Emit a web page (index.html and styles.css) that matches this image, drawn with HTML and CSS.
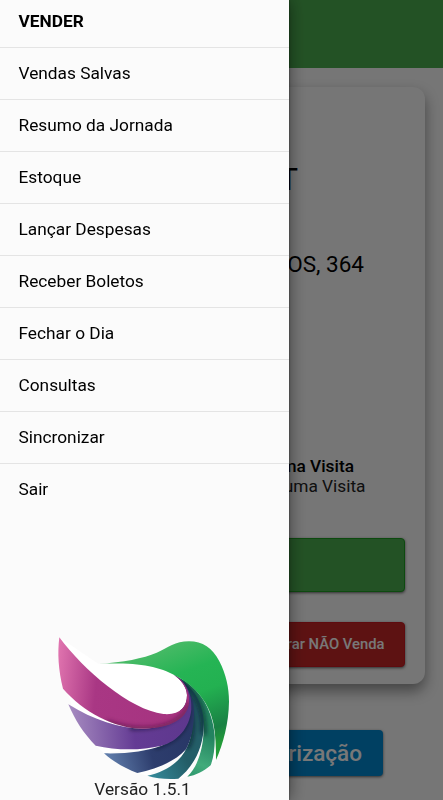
FILE: index.html
```html
<!DOCTYPE html>
<html lang="pt-BR">
<head>
<meta charset="utf-8">
<meta name="viewport" content="width=device-width">
<title>Vendas</title>
<link rel="stylesheet" href="styles.css">
</head>
<body>
<main class="page">
  <header class="appbar"></header>
  <section class="card">
    <h1 class="client">T</h1>
    <p class="address">OS, 364</p>
    <div class="visit"><strong>Nenhuma Visita</strong><span>Nenhuma Visita</span></div>
    <div class="button sell"></div>
    <div class="button nosale">Registrar NÃO Venda</div>
  </section>
  <div class="button authorize">Autorização</div>
</main>
<div class="scrim"></div>
<aside class="drawer">
  <nav class="menu">
    <a class="item active">VENDER</a>
    <a class="item">Vendas Salvas</a>
    <a class="item">Resumo da Jornada</a>
    <a class="item">Estoque</a>
    <a class="item">Lançar Despesas</a>
    <a class="item">Receber Boletos</a>
    <a class="item">Fechar o Dia</a>
    <a class="item">Consultas</a>
    <a class="item">Sincronizar</a>
    <a class="item">Sair</a>
  </nav>
  <footer class="brand">
    <svg class="logo" viewBox="45 48 525 432" aria-hidden="true">
      <defs>
        <linearGradient id="pink" gradientUnits="userSpaceOnUse" x1="50" y1="150" x2="455" y2="190"><stop offset="0" stop-color="#df73ae"/><stop offset=".3" stop-color="#a93784"/><stop offset="1" stop-color="#a5327f"/></linearGradient>
        <linearGradient id="purple" gradientUnits="userSpaceOnUse" x1="90" y1="320" x2="460" y2="300"><stop offset="0" stop-color="#a68bc0"/><stop offset=".52" stop-color="#643b94"/><stop offset="1" stop-color="#5d378d"/></linearGradient>
        <linearGradient id="blue" gradientUnits="userSpaceOnUse" x1="200" y1="420" x2="460" y2="350"><stop offset="0" stop-color="#617fad"/><stop offset=".5" stop-color="#2d3d6d"/><stop offset="1" stop-color="#283766"/></linearGradient>
        <linearGradient id="teal" gradientUnits="userSpaceOnUse" x1="335" y1="475" x2="440" y2="420"><stop offset="0" stop-color="#348999"/><stop offset="1" stop-color="#235d67"/></linearGradient>
        <linearGradient id="mint" gradientUnits="userSpaceOnUse" x1="460" y1="465" x2="510" y2="350"><stop offset="0" stop-color="#329b70"/><stop offset=".3" stop-color="#42ab7b"/><stop offset="1" stop-color="#238360"/></linearGradient>
        <linearGradient id="green" gradientUnits="userSpaceOnUse" x1="370" y1="80" x2="485" y2="390"><stop offset="0" stop-color="#48ba66"/><stop offset=".28" stop-color="#25b454"/><stop offset=".5" stop-color="#23b151"/><stop offset=".85" stop-color="#198044"/><stop offset="1" stop-color="#239b38"/></linearGradient>
        <path id="p-mint" d="M442 470C475 440 490 380 491 330C492 280 462 208 408 168C485 205 518 275 524 345C525 380 522 410 512 436C490 455 468 466 442 470Z"/>
        <path id="p-teal" d="M322 467C380 455 420 425 440 384C464 340 465 260 405 166C465 204 487 248 491 300C495 380 460 440 415 476C380 479 350 475 322 467Z"/>
        <path id="p-blue" d="M192 400C260 402 320 393 365 377C430 345 460 265 403 165C450 202 463 237 462 284C461 330 452 360 438 388C405 425 350 447 292 459C255 445 220 425 192 400Z"/>
        <path id="p-purple" d="M85 253C160 300 240 326 310 326C400 323 470 260 402 164C447 191 456 232 454 268C449 325 412 365 365 377C300 392 230 391 167 377C130 340 105 300 85 253Z"/>
        <path id="p-pink" d="M58 52C130 150 270 270 370 282C420 286 441 262 441 225C440 202 425 182 400 163C436 183 450 217 447 250C440 298 390 325 310 326C220 325 130 275 69 206C55 150 52 100 58 52Z"/>
        <clipPath id="c-mint"><use href="#p-mint"/></clipPath>
        <clipPath id="c-teal"><use href="#p-teal"/></clipPath>
        <clipPath id="c-blue"><use href="#p-blue"/></clipPath>
        <clipPath id="c-purple"><use href="#p-purple"/></clipPath>
        <clipPath id="c-pink"><use href="#p-pink"/></clipPath>
        <filter id="soft" x="-30%" y="-30%" width="160%" height="160%"><feGaussianBlur stdDeviation="6"/></filter>
      </defs>
      <path fill="#fff" d="M95 257C160 300 240 326 310 326L85 222ZM167 377C230 391 300 392 365 377L192 400ZM292 459Q395 435 440 384L322 467ZM415 476C460 440 487 400 491 330L442 470ZM512 436L524 345L528 420Z"/>
      <use href="#p-mint" fill="url(#mint)"/>
      <g clip-path="url(#c-mint)"><path class="shade" d="M491 345C494 280 475 220 420 178"/></g>
      <use href="#p-teal" fill="url(#teal)"/>
      <g clip-path="url(#c-teal)"><path class="shade" d="M440 384C464 340 465 280 425 181M490 340C493 280 470 210 425 181"/></g>
      <use href="#p-blue" fill="url(#blue)"/>
      <g clip-path="url(#c-blue)"><path class="shade" d="M345 380C440 350 465 285 420 177"/></g>
      <use href="#p-purple" fill="url(#purple)"/>
      <g clip-path="url(#c-purple)"><path class="shade" d="M270 322C400 323 470 270 410 169"/></g>
      <path fill="#fff" d="M58 52C130 150 270 270 370 282C420 286 441 262 441 225C440 202 425 182 400 163C340 132 280 128 175 131Z"/>
      <use href="#p-pink" fill="url(#pink)"/>
      <g clip-path="url(#c-pink)"><path class="shade light" d="M200 305C330 350 430 315 448 250"/></g>
      <path fill="url(#green)" d="M175 131C250 127 310 115 350 98C385 83 405 64 447 64C488 64 517 84 538 124C558 162 567 203 567 245C566 310 550 370 528 420C528 380 527 345 520 310C510 255 470 200 408 168C350 135 290 128 175 131Z"/>
    </svg>
    <span class="version">Versão 1.5.1</span>
  </footer>
</aside>
</body>
</html>
```
FILE: styles.css
```css
* { box-sizing: border-box; }
body {
  margin: 0;
  height: 800px;
  overflow: hidden;
  font-family: Roboto, sans-serif;
  background: #fafafa;
  color: #000;
}
.page { height: 800px; display: flex; flex-direction: column; }
.appbar { height: 68px; background: #4caf50; flex: none; }
.card {
  height: 597px;
  margin: 19px 18px 0;
  padding: 75px 20px 0;
  border-radius: 12px;
  background: #fafafa;
  box-shadow: 0 7px 14px rgba(0, 0, 0, .42);
  display: flex;
  flex-direction: column;
  align-items: flex-end;
}
.client { margin: 0 107px 0 0; font-size: 31px; line-height: 36px; font-weight: 400; }
.address { margin: 52px 41px 0 0; font-size: 22.5px; line-height: 28px; }
.visit {
  width: 100%;
  margin-top: 178px;
  display: flex;
  flex-direction: column;
  align-items: flex-end;
  font-size: 17.3px;
  line-height: 20px;
  color: #222;
}
.visit strong { margin-right: 51px; font-weight: 500; color: #000; }
.visit span { margin-right: 39.5px; }
.button {
  flex: none;
  border-radius: 4px;
  color: #fff;
  font-weight: 500;
  display: flex;
  align-items: center;
  justify-content: flex-end;
  box-shadow: 0 1px 3px rgba(0, 0, 0, .6);
}
.sell { width: 100%; height: 54px; margin-top: 42px; background: #4caf50; border: 1px solid #1d9d21; }
.nosale { width: 100%; height: 45px; margin-top: 30px; padding: 0 19.5px 1px 0; background: #c62828; font-size: 14.8px; border: 1px solid #c81820; }
.authorize { width: 322px; height: 46px; margin: 46px 0 0 61px; padding-right: 21px; background: #0288d1; font-size: 22.5px; }
.scrim { position: fixed; inset: 0; background: rgba(0, 0, 0, .53); }
.drawer {
  position: fixed;
  inset: 0 auto 0 0;
  width: 289px;
  background: #fbfbfb;
  box-shadow: 0 0 16px rgba(0, 0, 0, .5), 0 0 2px rgba(0, 0, 0, .5);
  display: flex;
  flex-direction: column;
  justify-content: space-between;
}
.menu { display: flex; flex-direction: column; margin-top: -4px; }
.item {
  height: 52px;
  padding: 0 0 1px 18.5px;
  display: flex;
  align-items: center;
  font-size: 17.3px;
  border-bottom: 1px solid #e4e4e4;
}
.item:last-child { border-bottom: 0; padding-bottom: 2px; }
.active { font-weight: 700; }
.brand { display: flex; flex-direction: column; align-items: center; color: #222; padding: 0 4px 1px 0; }
.logo { width: 175px; height: 144px; margin-bottom: -1px; display: block; }
.version { font-size: 17.3px; line-height: 20px; }
.shade { fill: none; stroke: #061020; stroke-opacity: .55; stroke-width: 16; filter: url(#soft); }
.light { stroke: #4b123c; stroke-opacity: .6; stroke-width: 12; }
```
